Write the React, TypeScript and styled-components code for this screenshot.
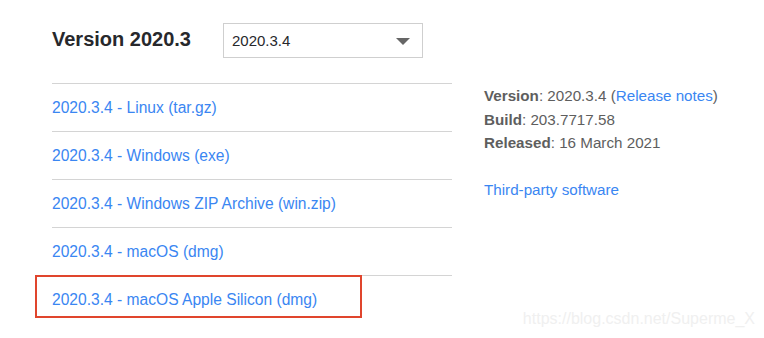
import React from "react";
import styled, { createGlobalStyle } from "styled-components";

const GlobalStyle = createGlobalStyle`
  html, body {
    margin: 0;
    padding: 0;
    background: #ffffff;
  }
  body {
    font-family: "Liberation Sans", Arial, sans-serif;
    color: #27282c;
  }
`;

const DOWNLOADS = [
  { label: "2020.3.4 - Linux (tar.gz)" },
  { label: "2020.3.4 - Windows (exe)" },
  { label: "2020.3.4 - Windows ZIP Archive (win.zip)" },
  { label: "2020.3.4 - macOS (dmg)" },
  { label: "2020.3.4 - macOS Apple Silicon (dmg)", marked: true },
];

const INFO = [
  { name: "Version", value: "2020.3.4 (", link: "Release notes", tail: ")" },
  { name: "Build", value: "203.7717.58" },
  { name: "Released", value: "16 March 2021" },
];

export default function App() {
  return (
    <Page>
      <GlobalStyle />
      <Header>
        <Title>Version 2020.3</Title>
        <Select>
          <SelectValue>2020.3.4</SelectValue>
          <Caret />
        </Select>
      </Header>
      <Body>
        <DownloadList>
          {DOWNLOADS.map((d) => (
            <DownloadRow key={d.label}>
              <BlueLink href="#">{d.label}</BlueLink>
              {d.marked && <Marker />}
            </DownloadRow>
          ))}
        </DownloadList>
        <Details>
          {INFO.map((row) => (
            <InfoLine key={row.name}>
              <InfoName>{row.name}</InfoName>: {row.value}
              {row.link && <BlueLink href="#">{row.link}</BlueLink>}
              {row.tail}
            </InfoLine>
          ))}
          <ThirdParty>
            <BlueLink href="#">Third-party software</BlueLink>
          </ThirdParty>
        </Details>
      </Body>
      <Watermark>https://blog.csdn.net/Superme_X</Watermark>
    </Page>
  );
}

const Page = styled.div`
  position: relative;
  width: 764px;
  height: 338px;
  padding: 23px 0 0 52px;
  box-sizing: border-box;
  overflow: hidden;
`;

const Header = styled.div`
  display: flex;
  align-items: center;
  gap: 32px;
`;

const Title = styled.h2`
  margin: 0;
  font-size: 20px;
  font-weight: 700;
  color: #27282c;
  line-height: 35px;
  position: relative;
  top: -1px;
`;

const Select = styled.div`
  width: 200px;
  height: 35px;
  box-sizing: border-box;
  border: 1px solid #cfcfcf;
  display: flex;
  align-items: center;
  justify-content: space-between;
  padding: 0 12px 0 8px;
`;

const SelectValue = styled.span`
  font-size: 15px;
  color: #27282c;
`;

const Caret = styled.span`
  width: 0;
  height: 0;
  border-left: 7px solid transparent;
  border-right: 7px solid transparent;
  border-top: 7px solid #666666;
  margin-top: 1px;
`;

const Body = styled.div`
  display: flex;
  gap: 32px;
  margin-top: 25px;
`;

const DownloadList = styled.div`
  width: 400px;
  display: flex;
  flex-direction: column;
`;

const DownloadRow = styled.div`
  position: relative;
  height: 48px;
  box-sizing: border-box;
  border-top: 1px solid #d4d4d4;
  display: flex;
  align-items: center;
  font-size: 15.6px;
`;

const Marker = styled.span`
  position: absolute;
  left: -17px;
  top: -1px;
  width: 327px;
  height: 43px;
  box-sizing: border-box;
  border: 2px solid #e0452d;
  pointer-events: none;
`;

const BlueLink = styled.a`
  color: #3a86f2;
  text-decoration: none;
`;

const Details = styled.div`
  padding-top: 1px;
  font-size: 15.2px;
  line-height: 23.5px;
  color: #5e5e5e;
`;

const InfoLine = styled.div``;

const InfoName = styled.b`
  font-weight: 700;
  color: #5e5e5e;
`;

const ThirdParty = styled.div`
  margin-top: 23.5px;
`;

const Watermark = styled.div`
  position: absolute;
  right: 9px;
  bottom: 10px;
  font-size: 16px;
  color: #f0f0f0;
`;
